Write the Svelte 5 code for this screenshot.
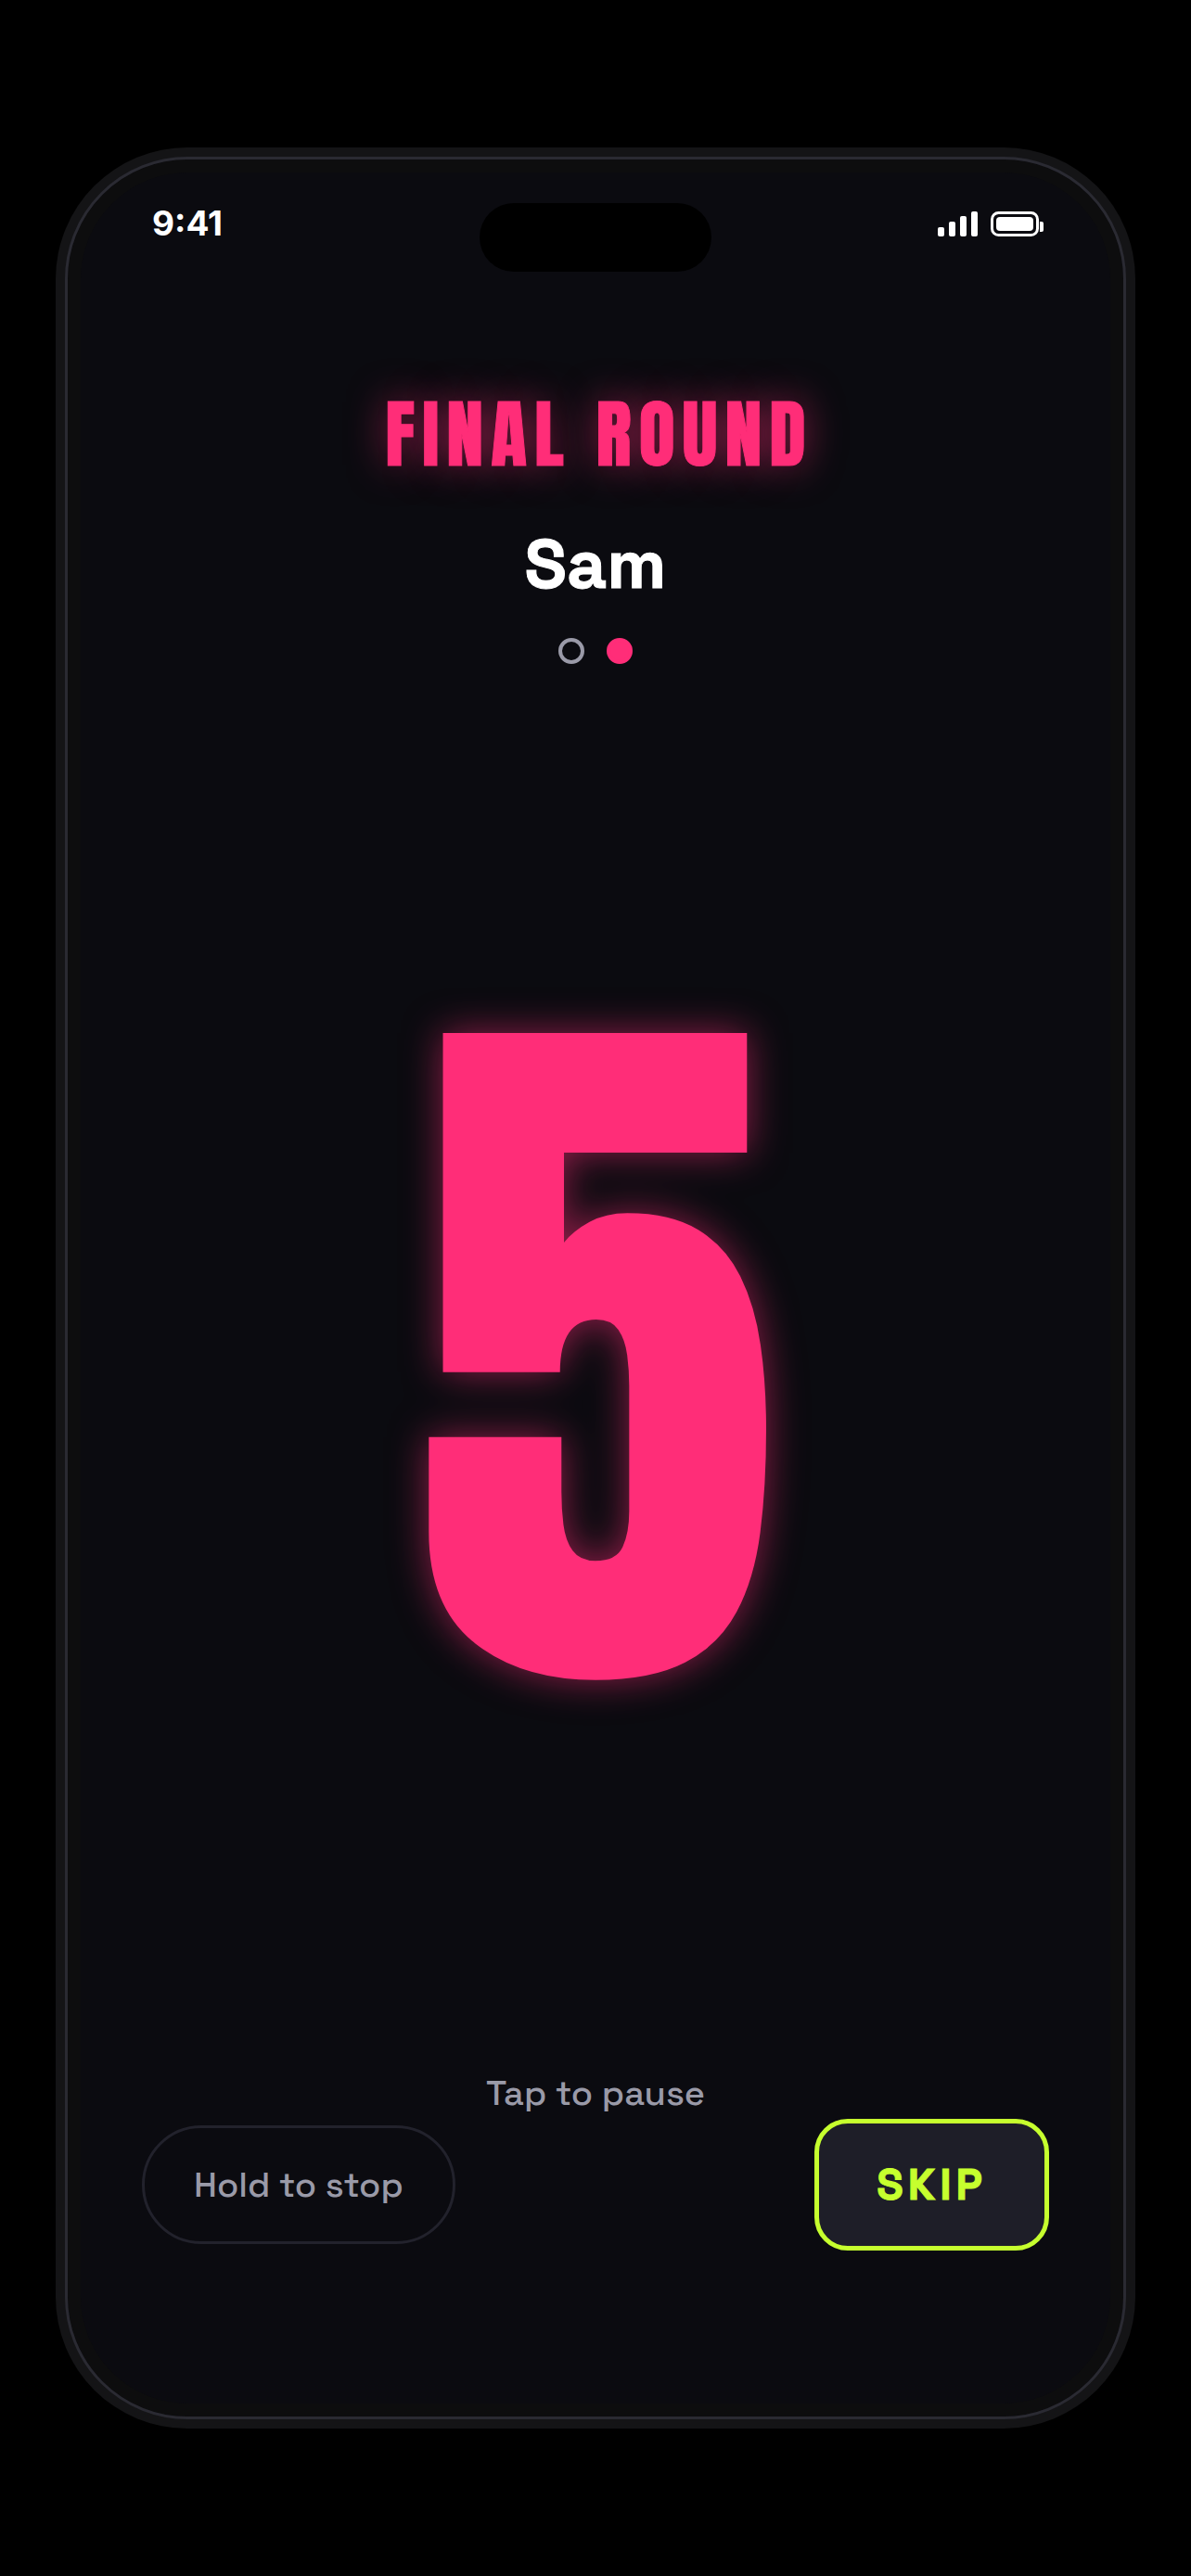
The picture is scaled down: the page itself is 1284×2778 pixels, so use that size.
<script lang="ts">
  let player = $state('Sam');
  let seconds = $state(5);
  let paused = $state(false);

  const rounds = [
    { label: 'Round 1', active: false },
    { label: 'Round 2', active: true },
  ];
</script>

<div class="stage">
  <main class="phone">
    <div class="island"></div>

    <div class="status-bar">
      <span class="time">9:41</span>
      <div class="status-icons">
        <svg width="43" height="27" viewBox="0 0 43 27" fill="currentColor">
          <rect x="0" y="17" width="7" height="10" rx="2"></rect>
          <rect x="12" y="11" width="7" height="16" rx="2"></rect>
          <rect x="24" y="5" width="7" height="22" rx="2"></rect>
          <rect x="36" y="0" width="7" height="27" rx="2"></rect>
        </svg>
        <svg width="57" height="27" viewBox="0 0 57 27" fill="currentColor">
          <rect x="1.5" y="1.5" width="49" height="24" rx="7" fill="none" stroke="currentColor" stroke-width="3"></rect>
          <rect x="6" y="6" width="40" height="15" rx="4"></rect>
          <path d="M53 11h2a2 2 0 0 1 2 2v7a2 2 0 0 1-2 2h-2z"></path>
        </svg>
      </div>
    </div>

    <header class="header">
      <h1 class="title">FINAL ROUND</h1>
      <h2 class="player">{player}</h2>
      <div class="dots">
        {#each rounds as round}
          <span class="dot" class:active={round.active} title={round.label}></span>
        {/each}
      </div>
    </header>

    <section class="counter">{seconds}</section>

    <footer class="footer">
      <button class="hint" onclick={() => (paused = !paused)}>
        {paused ? 'Tap to resume' : 'Tap to pause'}
      </button>
      <div class="actions">
        <button class="stop">Hold to stop</button>
        <button class="skip">SKIP</button>
      </div>
    </footer>
  </main>
</div>

<style>
  :global(body) {
    margin: 0;
    background: #000;
  }

  .stage {
    box-sizing: border-box;
    min-height: 100vh;
    padding: 169px 70px;
    display: flex;
    font-family: 'Space Grotesk', Inter, sans-serif;
  }

  .phone {
    position: relative;
    flex: 1;
    display: flex;
    flex-direction: column;
    border: 3px solid #2a2a32;
    border-radius: 132px;
    background: #0b0b10;
    box-shadow:
      0 0 0 10px #141416,
      inset 0 0 0 14px #0d0d0e;
    color: #fff;
  }

  .island {
    position: absolute;
    top: 47px;
    left: 50%;
    width: 250px;
    height: 74px;
    border-radius: 37px;
    background: #000;
    transform: translateX(-50%);
  }

  .status-bar {
    display: flex;
    align-items: center;
    justify-content: space-between;
    padding: 45px 86px 0 91px;
  }

  .time {
    font-family: Inter, sans-serif;
    font-size: 37px;
    font-weight: 700;
    line-height: 48px;
  }

  .status-icons {
    display: flex;
    gap: 14px;
  }

  .header {
    display: flex;
    flex-direction: column;
    align-items: center;
    padding-top: 153px;
  }

  .title {
    margin: 0;
    /* evens out the tracking after the last letter */
    padding-left: 8px;
    font-family: Anton, Impact, sans-serif;
    font-size: 80px;
    font-weight: 400;
    line-height: 100px;
    letter-spacing: 8px;
    color: #ff2d78;
    -webkit-text-stroke: 1px #ff2d78;
    text-shadow: 0 0 42px rgba(255, 45, 120, 0.55);
  }

  .player {
    margin: 40px 0 0;
    font-size: 75px;
    font-weight: 600;
    line-height: 100px;
    -webkit-text-stroke: 1px #fff;
  }

  .dots {
    display: flex;
    gap: 24px;
    margin-top: 30px;
  }

  .dot {
    box-sizing: border-box;
    width: 28px;
    height: 28px;
    border: 4px solid #9a9aa8;
    border-radius: 50%;
  }

  .dot.active {
    border-color: #ff2d78;
    background: #ff2d78;
  }

  .counter {
    flex: 1;
    display: flex;
    align-items: center;
    justify-content: center;
    padding-bottom: 22px;
    font-family: Anton, Impact, sans-serif;
    font-size: 800px;
    line-height: 1;
    color: #ff2d78;
    text-shadow: 0 0 42px rgba(255, 45, 120, 0.55);
  }

  .footer {
    display: flex;
    flex-direction: column;
    align-items: center;
    padding: 0 80px 179px;
  }

  button {
    margin: 0;
    font-family: inherit;
    cursor: pointer;
  }

  .hint {
    margin-bottom: 3px;
    padding: 0;
    border: none;
    background: none;
    font-size: 38px;
    font-weight: 500;
    line-height: 50px;
    color: #9a9aa8;
  }

  .actions {
    display: flex;
    align-items: center;
    align-self: stretch;
    justify-content: space-between;
  }

  .stop {
    padding: 36px 53px;
    border: 3px solid #22222c;
    border-radius: 65px;
    background: transparent;
    font-size: 38px;
    font-weight: 500;
    line-height: 50px;
    color: #9a9aa8;
  }

  .skip {
    padding: 36px 62px;
    border: 5px solid #c6ff2e;
    border-radius: 36px;
    background: #1e1e28;
    font-size: 47px;
    font-weight: 600;
    line-height: 60px;
    letter-spacing: 5px;
    color: #c6ff2e;
    -webkit-text-stroke: 1px #c6ff2e;
  }
</style>
